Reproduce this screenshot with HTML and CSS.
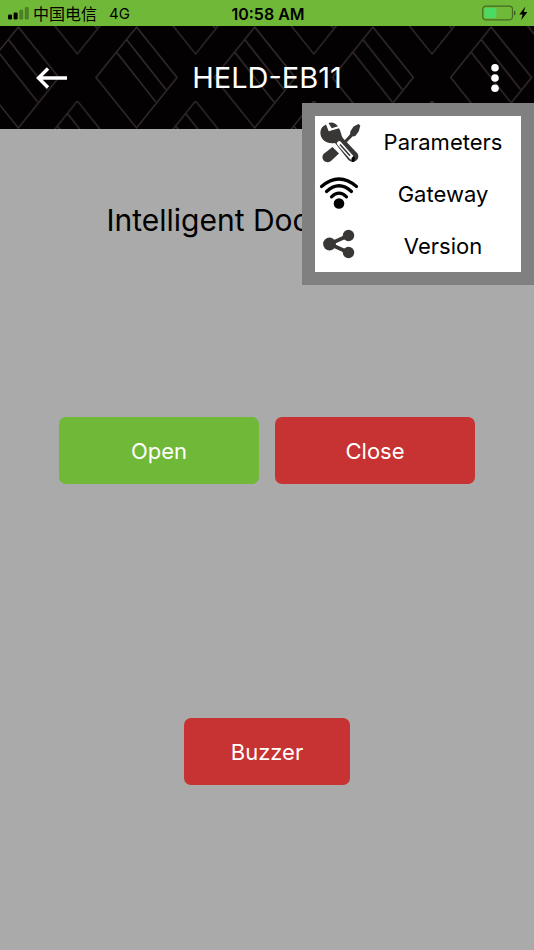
FILE: index.html
```html
<!DOCTYPE html>
<html lang="en">
<head>
<meta charset="utf-8">
<meta name="viewport" content="width=device-width, initial-scale=1">
<title>HELD-EB11</title>
<link rel="stylesheet" href="styles.css">
</head>
<body>
<div class="status">
  <div class="status-side">
    <svg class="signal" width="22" height="14" viewBox="0 0 22 14" aria-hidden="true">
      <rect x="0" y="8.5" width="4" height="5" rx="1.2"/>
      <rect x="5.6" y="6.5" width="4" height="7" rx="1.2"/>
      <g opacity=".3"><rect x="11.2" y="3.7" width="4" height="9.8" rx="1.2"/><rect x="16.8" y="1" width="4" height="12.5" rx="1.2"/></g>
    </svg>
    <span class="carrier" lang="zh-CN">中国电信</span>
    <span class="network">4G</span>
  </div>
  <time class="clock">10:58 AM</time>
  <div class="status-side status-end">
    <svg width="46" height="16" viewBox="0 0 46 16" aria-hidden="true">
      <rect x=".7" y="1.2" width="29.8" height="13.6" rx="3.2" fill="none" stroke="#000" stroke-opacity=".42" stroke-width="1.2"/>
      <rect x="2.4" y="3" width="12" height="10" rx="1.2" fill="#4cd964"/>
      <path d="M32 5.6q1.6.6 1.6 2.4T32 10.400z" opacity=".5"/>
      <path d="M43.300 1.600 37.300 9.500h3.300l-1.500 5.700 6.300-8.200h-3.600z"/>
    </svg>
  </div>
</div>
<header class="header">
  <svg class="pattern" width="100%" height="100%" aria-hidden="true">
    <defs>
      <pattern id="diamonds" x="77.4" y="-73" width="118.2" height="148" patternUnits="userSpaceOnUse">
        <g fill="none" stroke="#362c2c" stroke-width="1.4">
          <path d="M59.1 0 99.6 50.5 59.1 101 18.6 50.5zM49.1 12.5l39.4 50M39 25l39.4 50" transform="translate(0 74)"/>
          <path d="M59.1 0 99.6 50.5 59.1 101 18.6 50.5zM49.1 12.5l39.4 50M39 25l39.4 50" transform="translate(0 -74)"/>
          <path d="M0 0 40.5 50.5 0 101-40.5 50.5zM-10 12.5l39.4 50M-20 25l39.4 50"/>
          <path d="M0 0 40.5 50.5 0 101-40.5 50.5zM-10 12.5l39.4 50M-20 25l39.4 50" transform="translate(118.2 0)"/>
        </g>
      </pattern>
    </defs>
    <rect width="100%" height="100%" fill="url(#diamonds)"/>
  </svg>
  <button class="icon-button" type="button" aria-label="Back">
    <svg width="32" height="22" viewBox="0 0 32 22" fill="none" stroke="#fff" stroke-width="3.4" aria-hidden="true"><path d="M31 11H3M12 1.5 2.5 11l9.500 9.500"/></svg>
  </button>
  <h1 class="title">HELD-EB11</h1>
  <button class="icon-button" type="button" aria-label="More" aria-expanded="true">
    <svg width="8" height="30" viewBox="0 0 8 30" fill="#fff" aria-hidden="true"><circle cx="4" cy="4.7" r="3.8"/><circle cx="4" cy="15" r="3.8"/><circle cx="4" cy="25.3" r="3.8"/></svg>
  </button>
  <nav class="menu">
    <button class="menu-item" type="button">
      <svg width="50" height="50" viewBox="0 0 50 50" fill="#393636" aria-hidden="true">
        <path d="M43.500 7 38.500 9.500 35.300 14.500l-.2 2.800L29.500 23.500l2 2 6-6 2.800-.6 3.500-4.700L45.300 8.500z"/>
        <path d="M17.500 30l6.500 6.500-8 7.500c-5 4-11-2-7.500-7z"/>
        <path d="M11 7.500C5 10 3.800 17 7.500 22c3 4 8 4.600 12.500 4L33 42.500c5 5.500 13 0 9.500-6L28 21.200c-2-2.500-2-7-4-9.900l-10.300 3z"/>
        <path d="M13.500 6C16.500 4.500 20.500 5.800 23 9.200L16.700 11.200z"/>
        <path d="M24.200 26.500 36.200 40" fill="none" stroke="#fff" stroke-width="4.600" stroke-linecap="round"/>
        <path d="M25 27.500 35 38.700" fill="none" stroke="#393636" stroke-width="1.600"/>
        <path d="M36.500 41l2-2 1.500 2-.8 4h-2z" fill="#000"/>
      </svg>
      <span class="menu-label">Parameters</span>
    </button>
    <button class="menu-item" type="button">
      <svg width="50" height="50" viewBox="0 0 50 50" fill="none" stroke="#000" stroke-width="3.200" stroke-linecap="round" aria-hidden="true">
        <path d="M6.500 17.500Q24 2.500 41.500 17.500M11.500 22.500Q24 11 36.500 22.500M16.500 27.800Q24 20.500 31.500 27.800"/>
        <circle cx="24" cy="34.500" r="5.300" fill="#000" stroke="none"/>
      </svg>
      <span class="menu-label">Gateway</span>
    </button>
    <button class="menu-item" type="button">
      <svg width="50" height="50" viewBox="0 0 50 50" fill="#393636" aria-hidden="true">
        <path d="M33.500 14.500 14.500 23l19 8.500" fill="none" stroke="#393636" stroke-width="3.600"/>
        <circle cx="14.500" cy="23" r="6.400"/><circle cx="33.500" cy="14.500" r="5.700"/><circle cx="33.500" cy="31.500" r="5.700"/>
      </svg>
      <span class="menu-label">Version</span>
    </button>
  </nav>
</header>
<main class="content">
  <h2 class="heading">Intelligent Door Device</h2>
  <div class="actions">
    <button class="action open" type="button">Open</button>
    <button class="action" type="button">Close</button>
  </div>
  <button class="action buzzer" type="button">Buzzer</button>
</main>
</body>
</html>
```

FILE: styles.css
```css
* { box-sizing: border-box; }
body {
  margin: 0;
  min-height: 100vh;
  background: #aaa;
  color: #000;
  font-family: Inter, "Noto Sans CJK SC", sans-serif;
}
button {
  padding: 0;
  border: 0;
  background: none;
  color: inherit;
  font: inherit;
}
svg { display: block; }
.status {
  display: flex;
  align-items: center;
  height: 26px;
  padding: 0 6px 0 8px;
  background: #70b837;
  font-size: 15px;
  line-height: 26px;
}
.status-side {
  display: flex;
  flex: 1;
  align-items: center;
}
.status-end { justify-content: flex-end; }
.carrier { margin-left: 3px; font-family: "Noto Sans CJK SC", sans-serif; font-size: 16px; }
.network { margin-left: 12px; padding-top: 2px; }
.clock { padding-top: 2px; font-size: 16px; font-weight: 600; }
.header {
  position: relative;
  display: flex;
  align-items: center;
  justify-content: space-between;
  height: 103px;
  padding: 0 35px 0 36px;
  background: #030101;
  color: #fff;
}
.pattern { position: absolute; inset: 0; }
.icon-button { position: relative; }
.title {
  position: absolute;
  left: 0;
  right: 0;
  margin: 0;
  text-align: center;
  font-size: 29px;
  font-weight: 400;
  pointer-events: none;
}
.menu {
  position: absolute;
  z-index: 1;
  top: 77px;
  right: 0;
  width: 232px;
  border: 13px solid #808080;
  background: #fff;
  color: #000;
}
.menu-item {
  display: flex;
  align-items: center;
  width: 100%;
  height: 52px;
  font-size: 22px;
}
.menu-label { flex: 1; text-align: center; }
.content {
  display: flex;
  flex-direction: column;
  align-items: center;
  padding: 72px 59px;
}
.heading {
  margin: 0;
  font-size: 30px;
  font-weight: 400;
  line-height: 38px;
  white-space: nowrap;
}
.actions {
  display: flex;
  gap: 16px;
  width: 100%;
  margin-top: 178px;
}
.action {
  flex: 1;
  height: 67px;
  border-radius: 7px;
  background: #c73232;
  color: #fff;
  font-size: 22px;
}
.open { background: #70b837; }
.buzzer { flex: none; width: 40%; margin-top: 234px; }
```
